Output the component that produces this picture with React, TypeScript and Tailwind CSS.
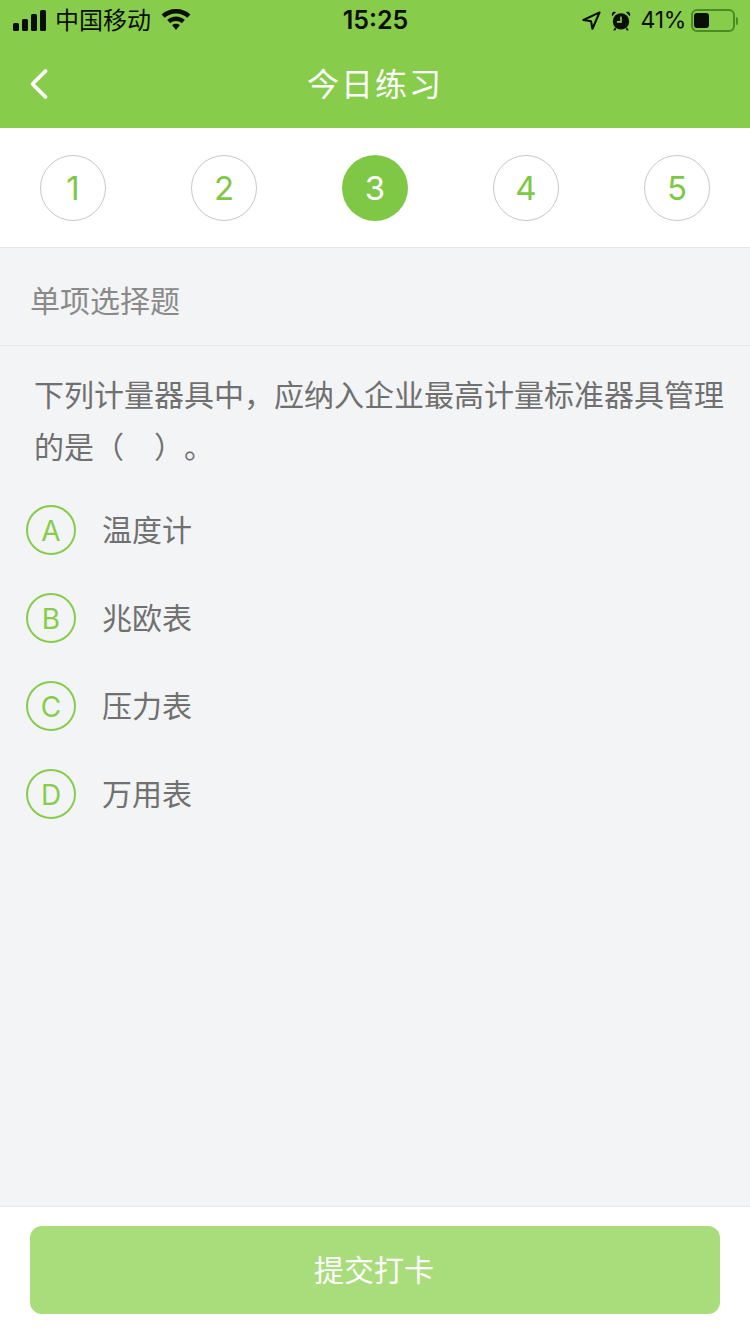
import React from "react";

const steps = [1, 2, 3, 4, 5];
const current = 3;

const options = [
  { key: "A", label: "温度计" },
  { key: "B", label: "兆欧表" },
  { key: "C", label: "压力表" },
  { key: "D", label: "万用表" },
];

const cjk = "font-['Liberation_Sans','Noto_Sans_CJK_SC',sans-serif]";
const latin = "font-['Inter','Noto_Sans_CJK_SC',sans-serif]";

function StatusBar() {
  return (
    <div className="flex h-10 items-center justify-between pl-[13px] pr-[12px] pt-[1px] text-[#0a0f05]">
      <div className="flex flex-1 items-center">
        {/* signal */}
        <svg width="34" height="21" viewBox="0 0 34 21" fill="currentColor">
          <rect x="0" y="13" width="6" height="8" rx="1.5" />
          <rect x="9" y="9" width="6" height="12" rx="1.5" />
          <rect x="18" y="4" width="6" height="17" rx="1.5" />
          <rect x="27" y="0" width="6" height="21" rx="1.5" />
        </svg>
        <span className="ml-[8px] text-[24px] leading-none">中国移动</span>
        {/* wifi */}
        <svg className="ml-[10px] mt-[-1px]" width="30" height="22" viewBox="0 0 30 22" fill="currentColor">
          <path d="M15 0C9.500 0 4.500 2 .6 5.400L3.700 8.700C6.700 6 10.700 4.400 15 4.400s8.300 1.600 11.300 4.300l3.100-3.300C25.500 2 20.500 0 15 0z" />
          <path d="M15 7.600c-3.400 0-6.500 1.300-8.800 3.300l3.100 3.300c1.500-1.300 3.500-2.200 5.700-2.200s4.200.9 5.700 2.200l3.100-3.300c-2.300-2-5.400-3.300-8.800-3.300z" />
          <path d="M15 14.800c-1.500 0-2.800.5-3.800 1.400L15 21l3.800-4.800c-1-.9-2.300-1.400-3.800-1.400z" />
        </svg>
      </div>
      <span className={`${latin} text-[25px] font-semibold leading-none`}>15:25</span>
      <div className="flex flex-1 items-center justify-end">
        {/* location arrow */}
        <svg width="19" height="19" viewBox="0 0 20 20" fill="none" stroke="currentColor" strokeWidth="2.200" strokeLinejoin="round">
          <path d="M18.500 1.500 1.500 9.500l8 1.200 1.500 8z" />
        </svg>
        {/* alarm */}
        <svg className="ml-[10px]" width="20" height="21" viewBox="0 0 22 22" fill="currentColor">
          <circle cx="11" cy="12" r="9" />
          <path d="M1 6.500 5.500 2 3 1 1 3zM21 6.500 16.500 2 19 1 21 3zM4 19l-1.500 3h2L6 20zM18 19l1.500 3h-2L16 20z" />
          <path d="M11 6.500V12.500H6.500" fill="none" stroke="#87cd4b" strokeWidth="1.800" />
        </svg>
        <span className={`${latin} ml-[10px] text-[23px] leading-none tracking-[-0.3px]`}>41%</span>
        {/* battery */}
        <div className="ml-[5px] flex items-center">
          <div className="flex h-[23px] w-[44px] items-center rounded-[6px] border-2 border-[#4c8a22] p-[1px]">
            <div className="h-[15px] w-[15px] rounded-[3px] bg-[#0a0f05]" />
          </div>
          <div className="ml-[1px] h-[8px] w-[2px] rounded-r-sm bg-[#4c8a22]" />
        </div>
      </div>
    </div>
  );
}

function NavBar() {
  return (
    <div className="relative flex h-[88px] items-center justify-center pb-[1px]">
      <svg className="absolute left-[29px] top-[28px]" width="20" height="32" viewBox="0 0 20 32" fill="none" stroke="#fff" strokeWidth="3.800" strokeLinecap="round" strokeLinejoin="round">
        <path d="M16.500 3 3.500 16l13 13" />
      </svg>
      <h1 className="pt-[2px] text-[32px] font-normal leading-none tracking-[2px] text-white">今日练习</h1>
    </div>
  );
}

export default function App() {
  return (
    <div className={`flex h-[1334px] w-[750px] flex-col overflow-hidden bg-[#f3f4f6] ${cjk}`}>
      <header className="bg-[#87cd4b]">
        <StatusBar />
        <NavBar />
      </header>

      <div className={`${latin} flex h-[120px] items-start justify-between border-b border-[#e6e6e6] bg-white px-10 pt-[27px] text-[33px]`}>
        {steps.map((n) =>
          n === current ? (
            <div key={n} className="flex h-[66px] w-[66px] items-center justify-center rounded-full bg-[#7fc845] pt-[1px] text-white">
              {n}
            </div>
          ) : (
            <div key={n} className="flex h-[66px] w-[66px] items-center justify-center rounded-full border border-[#c8c8c8] pt-[1px] text-[#7fc845]">
              {n}
            </div>
          )
        )}
      </div>

      <div className="flex h-[98px] items-center border-b border-[#e6e7e9] pl-[30px] pt-[10px] text-[30px] text-[#8a8a8a]">
        单项选择题
      </div>

      <main className="flex-1">
        <p className="mt-6 pl-[34px] pr-[25px] text-[30px] leading-[52px] text-[#707070] [text-spacing-trim:space-all]">
          下列计量器具中，应纳入企业最高计量标准器具管理的是（　）。
        </p>
        <ul className="mt-3 pl-[26px]">
          {options.map((o) => (
            <li key={o.key} className="flex h-[88px] items-center">
              <div className={`${latin} flex h-[50px] w-[50px] items-center justify-center rounded-full border-2 border-[#87cd4b] pt-[1px] text-[28px] text-[#87cd4b]`}>
                {o.key}
              </div>
              <span className="ml-[26px] text-[30px] text-[#707070]">{o.label}</span>
            </li>
          ))}
        </ul>
      </main>

      <footer className="flex h-[128px] items-start border-t border-[#e8e9eb] bg-white px-[30px] pt-[19px]">
        <button className="h-[88px] w-full rounded-xl bg-[#a9dc7a] pr-[2px] text-[30px] text-white">提交打卡</button>
      </footer>
    </div>
  );
}
